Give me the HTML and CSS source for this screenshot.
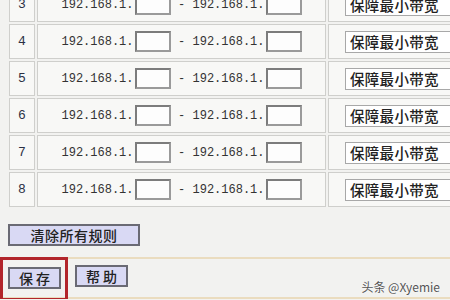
FILE: index.html
```html
<!DOCTYPE html>
<html lang="zh-CN">
<head>
    <meta charset="UTF-8">
    <title>IP 带宽控制规则</title>
    <link rel="stylesheet" href="styles.css">
</head>
<body>
    <table class="rules">
        <tr>
            <td class="num">3</td>
            <td class="range">
                <span class="ip">192.168.1.</span><input class="oct" type="text"><span class="dash">-</span><span class="ip">192.168.1.</span><input class="oct" type="text">
            </td>
            <td class="mode"><div class="select"><span>保障最小带宽</span><i class="arrow"></i></div></td>
        </tr>
        <tr>
            <td class="num">4</td>
            <td class="range">
                <span class="ip">192.168.1.</span><input class="oct" type="text"><span class="dash">-</span><span class="ip">192.168.1.</span><input class="oct" type="text">
            </td>
            <td class="mode"><div class="select"><span>保障最小带宽</span><i class="arrow"></i></div></td>
        </tr>
        <tr>
            <td class="num">5</td>
            <td class="range">
                <span class="ip">192.168.1.</span><input class="oct" type="text"><span class="dash">-</span><span class="ip">192.168.1.</span><input class="oct" type="text">
            </td>
            <td class="mode"><div class="select"><span>保障最小带宽</span><i class="arrow"></i></div></td>
        </tr>
        <tr>
            <td class="num">6</td>
            <td class="range">
                <span class="ip">192.168.1.</span><input class="oct" type="text"><span class="dash">-</span><span class="ip">192.168.1.</span><input class="oct" type="text">
            </td>
            <td class="mode"><div class="select"><span>保障最小带宽</span><i class="arrow"></i></div></td>
        </tr>
        <tr>
            <td class="num">7</td>
            <td class="range">
                <span class="ip">192.168.1.</span><input class="oct" type="text"><span class="dash">-</span><span class="ip">192.168.1.</span><input class="oct" type="text">
            </td>
            <td class="mode"><div class="select"><span>保障最小带宽</span><i class="arrow"></i></div></td>
        </tr>
        <tr>
            <td class="num">8</td>
            <td class="range">
                <span class="ip">192.168.1.</span><input class="oct" type="text"><span class="dash">-</span><span class="ip">192.168.1.</span><input class="oct" type="text">
            </td>
            <td class="mode"><div class="select"><span>保障最小带宽</span><i class="arrow"></i></div></td>
        </tr>
    </table>

    <div class="clear-row">
        <button class="btn btn-wide" type="button">清除所有规则</button>
    </div>

    <div class="footer">
        <div class="mark">
            <button class="btn" type="submit">保 存</button>
        </div>
        <button class="btn btn-help" type="button">帮 助</button>
        <span class="watermark">头条 @Xyemie</span>
    </div>
</body>
</html>
```

FILE: styles.css
```css
:root {
    --page-bg: #f2f2f0;
    --cell-bg: #f8f8f6;
    --line: #cfcfcc;
    --tan: #eadcbf;
    --btn-bg: #d9d9f4;
    --btn-border: #6a6a74;
    --text: #2a2a2a;
}

body {
    margin: 0;
    background-color: var(--page-bg);
    color: var(--text);
    font-family: "Noto Sans CJK SC", sans-serif;
    overflow: hidden;
}

.rules {
    border-collapse: separate;
    border-spacing: 2px;
    margin: -15px 0 0 7px;
    width: 480px;
    table-layout: fixed;
}

.rules td {
    height: 33px;
    padding: 0;
    border: 1px solid var(--line);
    background-color: var(--cell-bg);
}

.rules .num {
    width: 24px;
    text-align: center;
    font-family: "Liberation Mono", monospace;
    font-size: 13px;
    color: #2b3044;
}

.rules .range {
    width: 287px;
    text-align: center;
    white-space: nowrap;
    font-size: 0;
}

.ip {
    font-family: "Liberation Mono", monospace;
    font-size: 12px;
    color: #333;
    vertical-align: middle;
}

.dash {
    display: inline-block;
    width: 22px;
    font-family: "Liberation Mono", monospace;
    font-size: 12px;
    color: #333;
    text-align: center;
    vertical-align: middle;
}

.oct {
    box-sizing: border-box;
    width: 36px;
    height: 21px;
    margin: 0 0 0 1px;
    padding: 0;
    border: 2px solid #7c7c7c;
    border-right-color: #9a9a9a;
    border-bottom-color: #9a9a9a;
    background-color: #fdfdfd;
    vertical-align: middle;
}

.rules .mode {
    padding-left: 16px;
}

.select {
    display: flex;
    align-items: center;
    box-sizing: border-box;
    width: 128px;
    height: 22px;
    border: 1px solid #a8a8a8;
    background-color: #fff;
}

.select span {
    flex: 1;
    padding-left: 4px;
    font-size: 14.5px;
    font-weight: 500;
    line-height: 20px;
    color: #222;
    letter-spacing: 0.3px;
}

.arrow {
    width: 14px;
    height: 18px;
    margin-right: 2px;
    background-color: #c7d6f2;
}

.clear-row {
    padding: 13px 0 0 8px;
}

.btn {
    box-sizing: border-box;
    height: 22px;
    padding: 0;
    width: 53px;
    border: 2px solid var(--btn-border);
    background-color: var(--btn-bg);
    color: #222;
    font-family: "Noto Sans CJK SC", sans-serif;
    font-size: 14px;
    font-weight: 500;
    line-height: 18px;
}

.btn-wide {
    width: 132px;
    letter-spacing: 0.5px;
}

.footer {
    display: flex;
    align-items: flex-start;
    margin-top: 11px;
    height: 38px;
    border-top: 2px solid var(--tan);
    border-bottom: 2px solid var(--tan);
}

.mark {
    margin-top: -2px;
    padding: 5px 4px 9px 5px;
    border: 3px solid #b2252b;
}

.btn-help {
    margin: 6px 0 0 7px;
}

.watermark {
    margin: 20px 10px 0 auto;
    font-size: 12px;
    line-height: 16px;
    color: #555;
    text-shadow: 0 0 2px #fff;
}
```
